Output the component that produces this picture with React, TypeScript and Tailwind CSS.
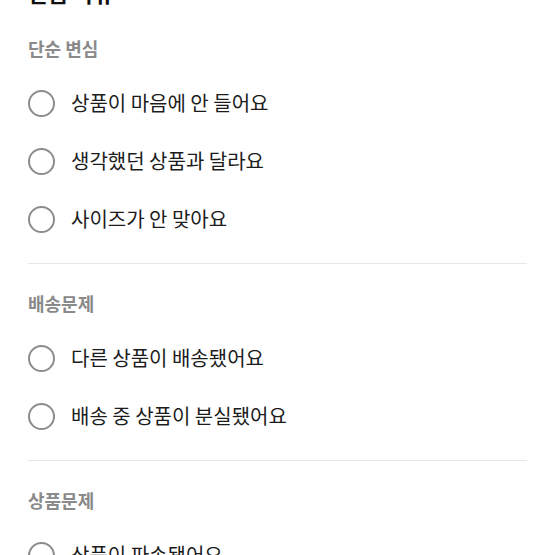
const sections = [
  {
    title: "단순 변심",
    items: ["상품이 마음에 안 들어요", "생각했던 상품과 달라요", "사이즈가 안 맞아요"],
  },
  {
    title: "배송문제",
    items: ["다른 상품이 배송됐어요", "배송 중 상품이 분실됐어요"],
  },
  {
    title: "상품문제",
    items: ["상품이 파손됐어요", "상품에 결함이 있어요"],
  },
];

function Radio({ label }: { label: string }) {
  return (
    <label className="flex h-[58px] items-center gap-[16px]">
      <span className="h-[27px] w-[27px] shrink-0 rounded-full border-[2.5px] border-[#8c8c8c] bg-white" />
      <span className="text-[20px] leading-none text-[#1c1c1c]">{label}</span>
    </label>
  );
}

export default function App() {
  return (
    <div
      className="h-[555px] w-[555px] overflow-hidden bg-white"
      style={{ fontFamily: '"Noto Sans CJK KR", "Noto Sans", sans-serif' }}
    >
      <div className="-mt-[21px] px-[28px]">
        <h2 className="h-[26px] text-[22px] font-bold leading-[26px] text-[#111]">반품 사유</h2>

        {sections.map((s, i) => (
          <div key={s.title}>
            {i > 0 && <div className="h-px bg-[#e8e8e8]" />}
            <div className={i === 0 ? "pt-[31px]" : "pt-[27px]"}>
              <div className="h-[24px] text-[18px] font-semibold leading-[24px] text-[#8a8a8a]">
                {s.title}
              </div>
              <div className="mt-[14px] pb-[15px]">
                {s.items.map((it) => (
                  <Radio key={it} label={it} />
                ))}
              </div>
            </div>
          </div>
        ))}
      </div>
    </div>
  );
}
